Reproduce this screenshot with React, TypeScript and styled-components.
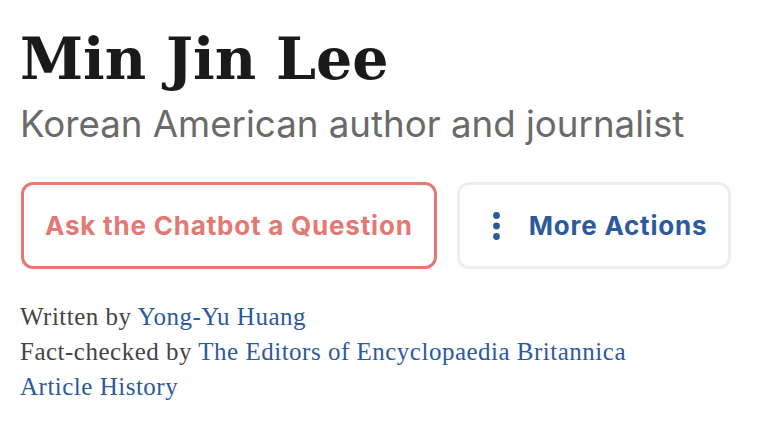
import React from "react";
import styled, { createGlobalStyle } from "styled-components";

const Global = createGlobalStyle`
  html, body { margin: 0; padding: 0; background: #fff; }
`;

const Page = styled.div`
  padding: 26px 20px 0 20px;
  display: flex;
  flex-direction: column;
  align-items: flex-start;
`;

const Title = styled.h1`
  margin: 0;
  font-family: "DejaVu Serif", Georgia, serif;
  font-weight: 700;
  font-size: 57px;
  line-height: 66px;
  color: #1a1a1a;
`;

const Subtitle = styled.div`
  margin-top: 10px;
  font-family: Inter, "Liberation Sans", sans-serif;
  font-size: 36.7px;
  line-height: 44px;
  color: #6a6a6a;
`;

const Actions = styled.div`
  display: flex;
  gap: 20px;
  margin: 36px 0 0 1px;
`;

const Button = styled.button<{ $variant: "primary" | "secondary" }>`
  height: 87px;
  box-sizing: border-box;
  display: flex;
  align-items: center;
  gap: 29px;
  padding: ${(p) => (p.$variant === "primary" ? "0 21px" : "0 21px 0 33px")};
  background: #fff;
  border-radius: 12px;
  border: 3px solid ${(p) => (p.$variant === "primary" ? "#e27a73" : "#eeeeee")};
  color: ${(p) => (p.$variant === "primary" ? "#e27a73" : "#2c5a9a")};
  font-family: Inter, "Liberation Sans", sans-serif;
  font-weight: 700;
  font-size: 26px;
  letter-spacing: 0.8px;
  cursor: pointer;
`;

const Byline = styled.div`
  margin-top: 30px;
  font-family: "Liberation Serif", Georgia, serif;
  font-size: 25px;
  line-height: 35px;
  letter-spacing: 0.5px;
  color: #444;
`;

const Link = styled.a`
  color: #2c5a9a;
  text-decoration: none;
`;

const Dots = () => (
  <svg width="7" height="28" viewBox="0 0 7 28" fill="#2c5a9a">
    <circle cx="3.5" cy="3.5" r="3.4" />
    <circle cx="3.5" cy="14" r="3.4" />
    <circle cx="3.5" cy="24.5" r="3.4" />
  </svg>
);

export default function App() {
  return (
    <>
      <Global />
      <Page>
        <Title>Min Jin Lee</Title>
        <Subtitle>Korean American author and journalist</Subtitle>
        <Actions>
          <Button $variant="primary">Ask the Chatbot a Question</Button>
          <Button $variant="secondary">
            <Dots />
            More Actions
          </Button>
        </Actions>
        <Byline>
          <div>
            Written by <Link href="#">Yong-Yu Huang</Link>
          </div>
          <div>
            Fact-checked by <Link href="#">The Editors of Encyclopaedia Britannica</Link>
          </div>
          <div>
            <Link href="#">Article History</Link>
          </div>
        </Byline>
      </Page>
    </>
  );
}
